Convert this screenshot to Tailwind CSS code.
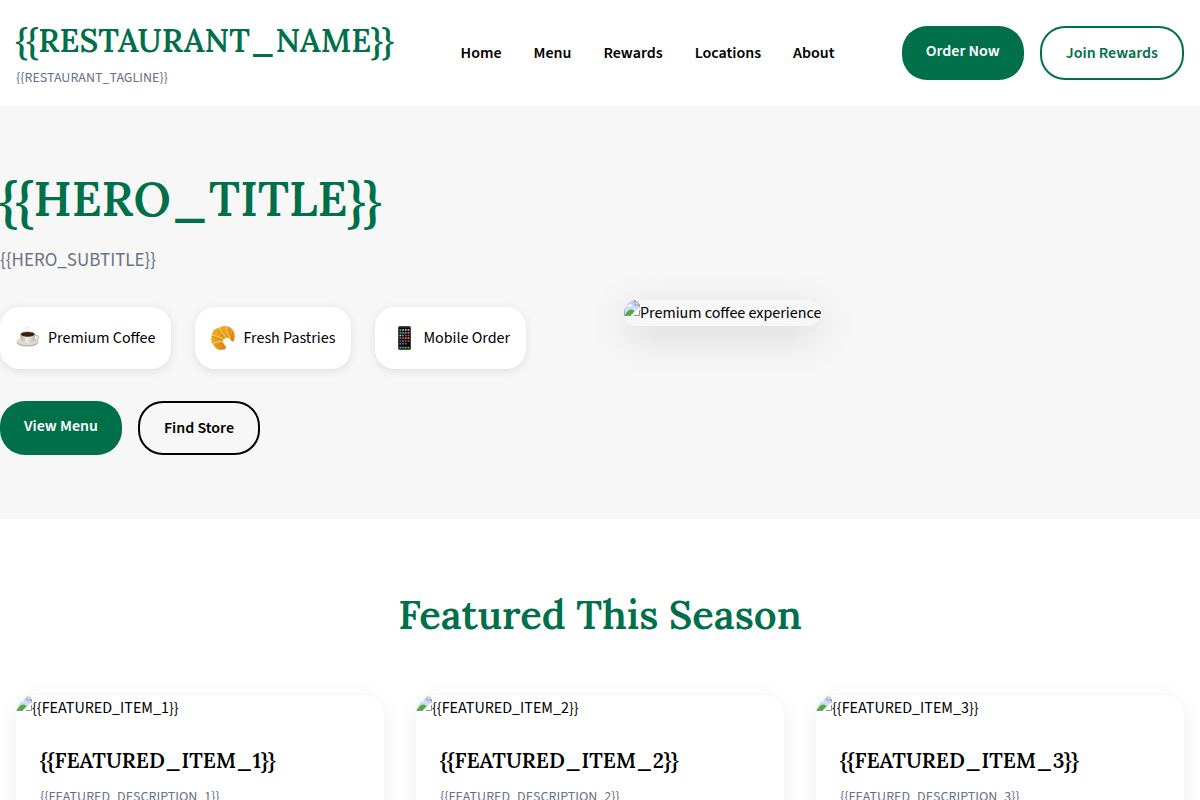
<!DOCTYPE html>
<html lang="en">
<head>
<meta charset="utf-8">
<meta name="viewport" content="width=device-width, initial-scale=1">
<title>{{RESTAURANT_NAME}}</title>
<script src="https://cdn.jsdelivr.net/npm/@tailwindcss/browser@4"></script>
</head>
<body class="bg-white font-['Source_Sans_3','Noto_Sans_CJK_SC',sans-serif] text-[16px] leading-[26px] text-black antialiased">
<svg class="absolute size-0" aria-hidden="true">
  <defs>
    <linearGradient id="sky" x1="0" y1="0" x2="0" y2="1"><stop offset="0" stop-color="#b5cdf5"/><stop offset="1" stop-color="#dbe8fc"/></linearGradient>
    <linearGradient id="crust" x1="0" y1="0" x2="1" y2="1"><stop offset="0" stop-color="#f6b52c"/><stop offset=".55" stop-color="#e89a1c"/><stop offset="1" stop-color="#b9650f"/></linearGradient>
    <linearGradient id="china" x1="0" y1="0" x2="1" y2="0"><stop offset="0" stop-color="#aaa69c"/><stop offset=".45" stop-color="#f0eee9"/><stop offset="1" stop-color="#b5b1a8"/></linearGradient>
  </defs>
  <symbol id="broken" viewBox="0 0 16 16">
    <path d="M0 0H11L15 4V8L8 15H0Z" fill="url(#sky)"/>
    <path d="M.5 15V.5H11L15.5 5V8" fill="none" stroke="#a5a5a5"/>
    <path d="M11 .5V5H15.5Z" fill="#fff" stroke="#8f8f8f"/>
    <path d="M3 6.500a1.500 1.500 0 0 1 2-1.500a2 2 0 0 1 3.500 1.500Z" fill="#fff"/>
    <path d="M1 15C3 11 5 9.500 7.500 9.500C9 9.500 10 10.500 10.500 11.500L7 15Z" fill="#55ac32"/>
    <path d="M0 15.500H7M10 15.500H15.500V10" fill="none" stroke="#8f8f8f"/>
    <path d="M16 7L7 16H9.500L16 9.500Z" fill="#fff"/>
  </symbol>
</svg>

<header class="flex items-center justify-between bg-white p-4">
  <div>
    <div class="font-['Lora','Liberation_Serif',serif] text-[32px] leading-[50px] font-semibold text-[#00704a]">{{RESTAURANT_NAME}}</div>
    <div class="text-[14px] leading-[24px] text-gray-500">{{RESTAURANT_TAGLINE}}</div>
  </div>
  <nav class="flex gap-8 font-semibold">
    <a href="#home">Home</a>
    <a href="#menu">Menu</a>
    <a href="#rewards">Rewards</a>
    <a href="#locations">Locations</a>
    <a href="#about">About</a>
  </nav>
  <div class="flex gap-4 font-semibold">
    <a href="#order" class="rounded-[25px] bg-[#00704a] px-6 py-3 text-white">Order Now</a>
    <a href="#join" class="rounded-[25px] border-2 border-[#00704a] px-6 py-3 text-[#00704a]">Join Rewards</a>
  </div>
</header>

<main>
  <section class="grid grid-cols-2 items-center gap-12 bg-[#f7f7f7] py-16">
    <div>
      <h1 class="mb-4 font-['Lora','Liberation_Serif',serif] text-[48px] leading-[57px] font-semibold text-[#00704a]">{{HERO_TITLE}}</h1>
      <p class="mb-7 text-[19px] leading-9 text-gray-500">{{HERO_SUBTITLE}}</p>
      <ul class="mb-8 flex gap-6">
        <li class="flex items-center gap-2 rounded-[20px] bg-white px-4 py-[18px] shadow-[0_2px_10px_rgba(0,0,0,0.1)]">
          <svg class="size-6" viewBox="0 0 24 24" aria-hidden="true">
            <ellipse cx="11.500" cy="16" rx="11" ry="4.600" fill="#aaa69d"/>
            <ellipse cx="11.500" cy="15.300" rx="10.800" ry="4.200" fill="#ded9cf"/>
            <path d="M19 9.500C24 8.500 24 14.500 17 14.500" fill="none" stroke="#c4c0b7" stroke-width="1.300"/>
            <path d="M4 8C4 13.500 7 17 11.500 17S19.500 13.500 19.500 8Z" fill="url(#china)"/>
            <ellipse cx="11.700" cy="8" rx="7.800" ry="3.100" fill="#d8d4cb"/>
            <ellipse cx="11.700" cy="8.300" rx="6.700" ry="2.400" fill="#3b1d10"/>
            <path d="M10 4C7.500 2.500 12 2 10.500 0M12.500 4C14 2.500 11 2 12.500 1" fill="none" stroke="#d2d2d2" stroke-width=".8"/>
          </svg>
          <span>Premium Coffee</span>
        </li>
        <li class="flex items-center gap-2 rounded-[20px] bg-white px-4 py-[18px] shadow-[0_2px_10px_rgba(0,0,0,0.1)]">
          <svg class="size-6" viewBox="0 0 24 24" aria-hidden="true">
            <path d="M1 9C1 5 4 2 8 2C12-1 18-.5 21 3C24 6 24.500 11 22.500 15.500C21 16 19.500 14.500 19 12.500C17 11 14 11.500 12.500 13.500C11.500 15.500 12 17.500 14 19.500C15.500 21 15 23 13 23.500C9 24.500 5 23.500 3.500 20C0 17 -.5 12.500 1 9Z" fill="url(#crust)"/>
            <path d="M8 2C9.500 5 12 8 15 11M15 .8C15 4 17 8.500 19 12M1 9C4 9.500 9 11 12.500 13.500M2 17.500C5 16 9 15 12 15.500" fill="none" stroke="#ffda78" stroke-width=".8"/>
            <path d="M6.500 3C8 7 10.500 9.500 13.500 12M1 10.500C4 11 8 13 12 14.500M17 .9C17.500 4 19 8 20.500 11M4.500 20.500C7 18.500 9.500 17.500 12.500 17.800" fill="none" stroke="#c97a18" stroke-width=".6"/>
          </svg>
          <span>Fresh Pastries</span>
        </li>
        <li class="flex items-center gap-2 rounded-[20px] bg-white px-4 py-[18px] shadow-[0_2px_10px_rgba(0,0,0,0.1)]">
          <svg class="size-6" viewBox="0 0 24 24" aria-hidden="true">
            <rect x="7" y="0" width="13" height="24" rx="1.800" fill="#454545"/>
            <rect x="8" y="1.500" width="11" height="21" fill="#080808"/>
            <g stroke-width="1.700" stroke-dasharray="1.700 1">
              <path d="M8.500 4H11" stroke="#39c85a"/><path d="M11.200 4H18.500" stroke="#d9d3e5"/>
              <path d="M8.500 6.800H14" stroke="#2ca8e0"/><path d="M13.900 6.800H18.500" stroke="#8a8d91"/>
              <path d="M8.500 9.500H12" stroke="#f6d943"/><path d="M11.200 9.500H18.500" stroke="#e4493f"/>
              <path d="M8.500 12.200H14" stroke="#9a58d0"/><path d="M13.900 12.200H18.500" stroke="#f08b23"/>
              <path d="M8.500 15H14" stroke="#81745a"/><path d="M13.900 15H18.500" stroke="#4b75d6"/>
              <path d="M8.500 17.700H11" stroke="#2b9fea"/><path d="M11.200 17.700H16" stroke="#d8443c"/>
              <path d="M8.500 21.500H11" stroke="#42d65b"/><path d="M11.200 21.500H14" stroke="#31a9ef"/><path d="M13.900 21.500H18.500" stroke="#42d65b"/>
            </g>
          </svg>
          <span>Mobile Order</span>
        </li>
      </ul>
      <div class="flex gap-4 font-semibold">
        <a href="#menu" class="rounded-[25px] bg-[#00704a] px-6 py-3 text-white">View Menu</a>
        <a href="#stores" class="rounded-[25px] border-2 border-black px-6 py-3">Find Store</a>
      </div>
    </div>
    <div class="flex">
      <div class="flex items-start overflow-hidden rounded-[20px] shadow-[0_10px_40px_rgba(0,0,0,0.15)]">
        <svg class="size-4 shrink-0" aria-hidden="true"><use href="#broken"/></svg>
        <span>Premium coffee experience</span>
      </div>
    </div>
  </section>

  <section class="px-4 py-16">
    <h2 class="mb-12 text-center font-['Lora','Liberation_Serif',serif] text-[40px] leading-16 font-semibold text-[#00704a]">Featured This Season</h2>
    <div class="grid grid-cols-3 gap-8">
      <article class="overflow-hidden rounded-[20px] bg-white shadow-[0_4px_20px_rgba(0,0,0,0.08)]">
        <div class="flex items-start"><svg class="size-4 shrink-0" aria-hidden="true"><use href="#broken"/></svg><span>{{FEATURED_ITEM_1}}</span></div>
        <div class="p-6">
          <h3 class="mb-2 font-['Lora','Liberation_Serif',serif] text-[21px] leading-8 font-semibold">{{FEATURED_ITEM_1}}</h3>
          <p class="text-[14px] leading-[24px] text-gray-500">{{FEATURED_DESCRIPTION_1}}</p>
        </div>
      </article>
      <article class="overflow-hidden rounded-[20px] bg-white shadow-[0_4px_20px_rgba(0,0,0,0.08)]">
        <div class="flex items-start"><svg class="size-4 shrink-0" aria-hidden="true"><use href="#broken"/></svg><span>{{FEATURED_ITEM_2}}</span></div>
        <div class="p-6">
          <h3 class="mb-2 font-['Lora','Liberation_Serif',serif] text-[21px] leading-8 font-semibold">{{FEATURED_ITEM_2}}</h3>
          <p class="text-[14px] leading-[24px] text-gray-500">{{FEATURED_DESCRIPTION_2}}</p>
        </div>
      </article>
      <article class="overflow-hidden rounded-[20px] bg-white shadow-[0_4px_20px_rgba(0,0,0,0.08)]">
        <div class="flex items-start"><svg class="size-4 shrink-0" aria-hidden="true"><use href="#broken"/></svg><span>{{FEATURED_ITEM_3}}</span></div>
        <div class="p-6">
          <h3 class="mb-2 font-['Lora','Liberation_Serif',serif] text-[21px] leading-8 font-semibold">{{FEATURED_ITEM_3}}</h3>
          <p class="text-[14px] leading-[24px] text-gray-500">{{FEATURED_DESCRIPTION_3}}</p>
        </div>
      </article>
    </div>
  </section>
</main>
</body>
</html>
